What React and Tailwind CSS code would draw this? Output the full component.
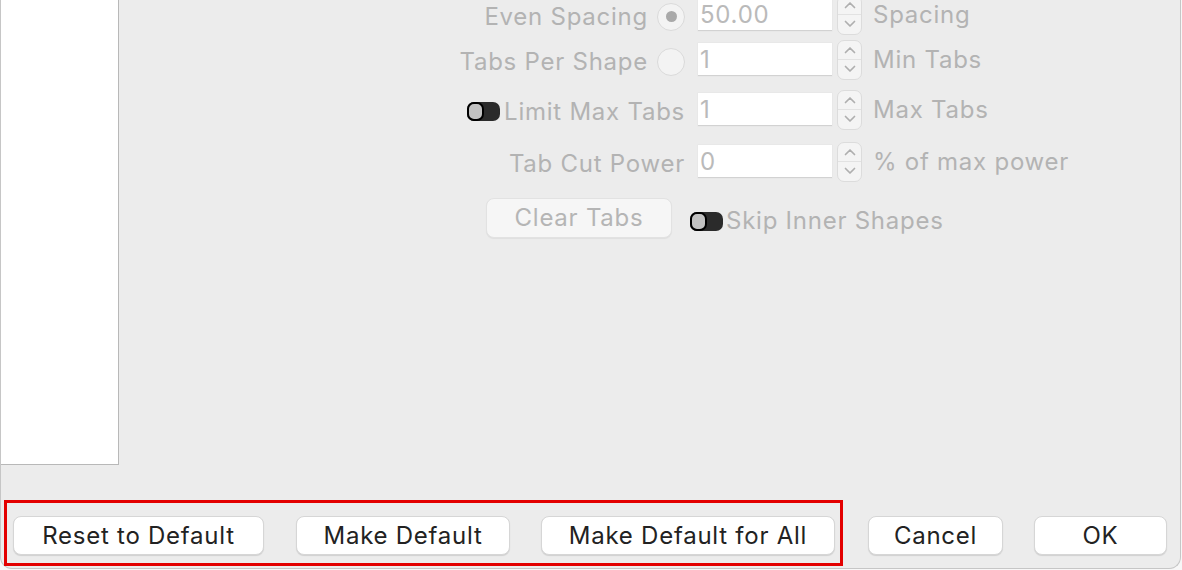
import React from "react";

const font = { fontFamily: "Inter, 'Noto Sans', sans-serif" };

function Stepper() {
  return (
    <div className="ml-[5px] w-[25px] h-[40px] shrink-0 rounded-[7px] bg-[#f4f4f4] border border-[#dcdcdc] flex flex-col items-center justify-center">
      <div className="flex-1 flex items-center justify-center w-full border-b border-[#e2e2e2]">
        <svg width="12" height="8" viewBox="0 0 12 8" fill="none">
          <path d="M1.5 6.5 L6 2 L10.5 6.5" stroke="#afafaf" strokeWidth="1.7" strokeLinecap="round" strokeLinejoin="round" />
        </svg>
      </div>
      <div className="flex-1 flex items-center justify-center w-full">
        <svg width="12" height="8" viewBox="0 0 12 8" fill="none">
          <path d="M1.5 1.5 L6 6 L10.5 1.5" stroke="#afafaf" strokeWidth="1.7" strokeLinecap="round" strokeLinejoin="round" />
        </svg>
      </div>
    </div>
  );
}

function Field({ value }) {
  return (
    <div className="ml-[13px] w-[134px] h-[33px] shrink-0 bg-white border-b border-[#d2d2d2] shadow-[0_0_0_0.5px_#e4e4e4] flex items-center pl-[2px] pt-[2px] text-[24px] leading-none text-[#bababa]">
      {value}
    </div>
  );
}

function Radio({ checked }) {
  return (
    <div className="ml-[9px] w-[28px] h-[28px] rounded-full bg-[#f3f3f3] border border-[#dadada] flex items-center justify-center shrink-0">
      {checked && <div className="w-[11px] h-[11px] rounded-full bg-[#a9a9a9]" />}
    </div>
  );
}

function Toggle() {
  return (
    <div className="w-[33px] h-[19px] rounded-[7px] bg-[#2b2b2b] flex items-center shrink-0">
      <div className="w-[17px] h-[19px] rounded-[7px] bg-[#c2c2c2] border-[2px] border-black" />
    </div>
  );
}

function Row({ label, value, unit, className = "" }) {
  return (
    <div className={"flex items-center h-[33px] " + className}>
      <div className="w-[566px] flex justify-end items-center text-[24px] text-[#b3b3b3] pt-[4px]">{label}</div>
      <Field value={value} />
      <Stepper />
      <span className="ml-[11px] text-[24px] text-[#b3b3b3]">{unit}</span>
    </div>
  );
}

function Btn({ children, className = "" }) {
  return (
    <div className={"h-[39px] rounded-[8px] bg-white border border-[#d6d6d6] shadow-[0_1px_1px_rgba(0,0,0,0.12)] flex items-center justify-center text-[24px] text-[#222222] " + className}>
      {children}
    </div>
  );
}

export default function App() {
  return (
    <div className="w-[1182px] h-[570px] bg-[#f7f7f7] overflow-hidden tracking-[0.75px]" style={font}>
      <div className="w-[1181px] h-[569px] bg-[#ececec] border-l border-r border-b border-[#c6c6c6] rounded-b-[12px] flex flex-col">
        <div className="flex h-[465px]">
          <div className="w-[118px] h-full bg-white border-r border-b border-[#b8b8b8] shrink-0" />
          <div className="flex-1 flex flex-col">
            <Row className="-mt-[2px]" label={<><span>Even Spacing</span><Radio checked /></>} value="50.00" unit="Spacing" />
            <Row className="mt-[12px]" label={<><span>Tabs Per Shape</span><Radio /></>} value="1" unit="Min Tabs" />
            <Row className="mt-[17px]" label={<><Toggle /><span className="ml-[4px]">Limit Max Tabs</span></>} value="1" unit="Max Tabs" />
            <Row className="mt-[19px]" label={<span>Tab Cut Power</span>} value="0" unit="% of max power" />
            <div className="flex items-center mt-[19px] ml-[367px]">
              <div className="w-[186px] h-[40px] rounded-[8px] bg-[#f6f6f6] border border-[#e2e2e2] shadow-[0_1px_1px_rgba(0,0,0,0.06)] flex items-center justify-center text-[24px] text-[#b5b5b5]">
                Clear Tabs
              </div>
              <div className="ml-[18px] mt-[6px] flex items-center">
                <Toggle />
                <span className="ml-[3px] text-[24px] text-[#b3b3b3]">Skip Inner Shapes</span>
              </div>
            </div>
          </div>
        </div>
        <div className="flex items-end mt-[35px] ml-[3px]">
          <div className="flex border-[3px] border-[#e30000] pt-[13px] pb-[8px] pl-[6px] pr-[5px]">
            <Btn className="w-[251px]">Reset to Default</Btn>
            <Btn className="w-[214px] ml-[32px]">Make Default</Btn>
            <Btn className="w-[294px] ml-[31px]">Make Default for All</Btn>
          </div>
          <div className="flex mb-[11px]">
            <Btn className="w-[135px] ml-[25px]">Cancel</Btn>
            <Btn className="w-[133px] ml-[31px]">OK</Btn>
          </div>
        </div>
      </div>
    </div>
  );
}
